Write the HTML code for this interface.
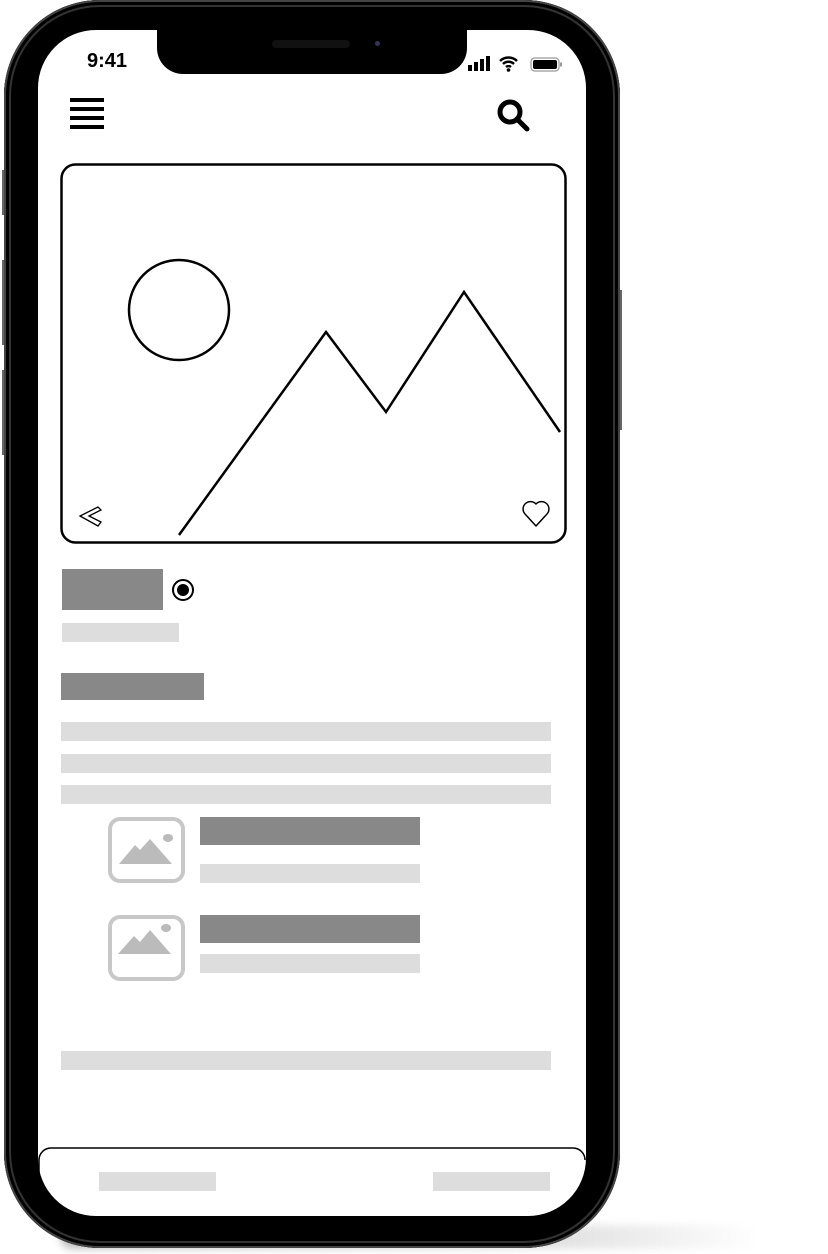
<!DOCTYPE html>
<html><head><meta charset="utf-8"><style>
body{margin:0;width:828px;height:1254px;background:#fff;position:relative;overflow:hidden;font-family:"Liberation Sans",sans-serif}
.a{position:absolute}
.dk{background:#888}.lt{background:#ddd}
</style></head><body>
<div class="a" style="left:60px;top:1225px;width:700px;height:24px;background:linear-gradient(90deg,rgba(0,0,0,.25),rgba(0,0,0,.12) 70%,rgba(0,0,0,0));filter:blur(4px);border-radius:12px"></div>
<div class="a" style="left:2px;top:170px;width:4px;height:45px;background:#666"></div>
<div class="a" style="left:2px;top:260px;width:4px;height:85px;background:#666"></div>
<div class="a" style="left:2px;top:370px;width:4px;height:85px;background:#666"></div>
<div class="a" style="left:618px;top:290px;width:4px;height:140px;background:#666"></div>
<div class="a" style="left:4px;top:0;width:616px;height:1248px;background:#000;border-radius:96px;box-shadow:inset 0 0 0 2px #444,inset 0 0 0 5px #000,inset 0 0 0 7px #333"></div>
<div class="a" style="left:38px;top:30px;width:548px;height:1186px;background:#fff;border-radius:58px;overflow:hidden">
 <div class="a" style="left:119px;top:-2px;width:310px;height:46px;background:#000;border-radius:0 0 26px 26px"></div>
 <div class="a" style="left:234px;top:10px;width:78px;height:8px;background:#111;border-radius:4px"></div>
 <div class="a" style="left:337px;top:11px;width:5px;height:5px;background:#335;border-radius:50%"></div>
 <div class="a" style="left:49px;top:20px;font-size:20px;font-weight:bold;color:#000">9:41</div>
 <svg class="a" style="left:428px;top:24px" width="100" height="20" viewBox="0 0 100 20">
  <rect x="2" y="11" width="4" height="6" fill="#000"/><rect x="8" y="8" width="4" height="9" fill="#000"/><rect x="14" y="5" width="4" height="12" fill="#000"/><rect x="20" y="2" width="4" height="15" fill="#000"/>
  <path d="M34 7a12 12 0 0 1 17 0M37 10a8 8 0 0 1 11 0M40 13a4 4 0 0 1 5 0" stroke="#000" stroke-width="2.5" fill="none"/><circle cx="42.5" cy="16" r="1.8" fill="#000"/>
  <rect x="65" y="4" width="28" height="13" rx="3.5" fill="none" stroke="#999" stroke-width="1.2"/><rect x="67" y="6" width="24" height="9" rx="2" fill="#000"/><rect x="94" y="8.5" width="2" height="4" fill="#999"/>
 </svg>
 <div class="a" style="left:32px;top:68px;width:34px">
  <div style="height:4px;background:#000;margin-bottom:5px"></div><div style="height:4px;background:#000;margin-bottom:5px"></div><div style="height:4px;background:#000;margin-bottom:5px"></div><div style="height:4px;background:#000"></div>
 </div>
 <svg class="a" style="left:458px;top:68px" width="40" height="40" viewBox="0 0 40 40"><circle cx="14" cy="14" r="10" stroke="#000" stroke-width="5" fill="none"/><path d="M21 21l10 10" stroke="#000" stroke-width="5" stroke-linecap="round"/></svg>
</div>
<svg class="a" style="left:0;top:0" width="828" height="1254" viewBox="0 0 828 1254">
 <rect x="61.5" y="164.5" width="504" height="378" rx="14" fill="none" stroke="#000" stroke-width="2.5"/>
 <circle cx="179" cy="310" r="50" fill="none" stroke="#000" stroke-width="2.5"/>
 <polyline points="179,535 326,332 386,412 464,292 560,432" fill="none" stroke="#000" stroke-width="2.5"/>
 <path d="M98 507 L80 516 L98 526 L101 522 L89 516 L101 510 Z" fill="none" stroke="#000" stroke-width="1.3"/>
 <path d="M536 526 L525 514 A7 7 0 0 1 536 504 A7 7 0 0 1 547 514 Z" fill="none" stroke="#000" stroke-width="1.5" stroke-linejoin="round"/>
 <circle cx="183" cy="590" r="10" fill="none" stroke="#000" stroke-width="2"/><circle cx="183" cy="590" r="6" fill="#000"/>
 <g fill="#c0c0c0">
  <rect x="110" y="819" width="73" height="62" rx="10" fill="none" stroke="#c8c8c8" stroke-width="4"/>
  <path d="M119 864 L135 845 L140 850 L150 839 L172 864 Z" fill="#bbb"/><ellipse cx="168" cy="838" rx="5" ry="4" fill="#bbb"/>
  <rect x="110" y="917" width="73" height="62" rx="10" fill="none" stroke="#c8c8c8" stroke-width="4"/>
  <path d="M118 954 L134 936 L140 942 L150 930 L171 954 Z" fill="#bbb"/><ellipse cx="166" cy="928" rx="5" ry="4" fill="#bbb"/>
 </g>
 <path d="M39 1215 L39 1160 A12 12 0 0 1 51 1148 L573 1148 A12 12 0 0 1 585 1160" fill="none" stroke="#000" stroke-width="1.5"/>
</svg>
<div class="a dk" style="left:62px;top:569px;width:101px;height:41px"></div>
<div class="a lt" style="left:62px;top:623px;width:117px;height:19px"></div>
<div class="a dk" style="left:61px;top:673px;width:143px;height:27px"></div>
<div class="a lt" style="left:61px;top:722px;width:490px;height:19px"></div>
<div class="a lt" style="left:61px;top:754px;width:490px;height:19px"></div>
<div class="a lt" style="left:61px;top:785px;width:490px;height:19px"></div>
<div class="a dk" style="left:200px;top:817px;width:220px;height:28px"></div>
<div class="a lt" style="left:200px;top:864px;width:220px;height:19px"></div>
<div class="a dk" style="left:200px;top:915px;width:220px;height:28px"></div>
<div class="a lt" style="left:200px;top:954px;width:220px;height:19px"></div>
<div class="a lt" style="left:61px;top:1051px;width:490px;height:19px"></div>
<div class="a lt" style="left:99px;top:1172px;width:117px;height:19px"></div>
<div class="a lt" style="left:433px;top:1172px;width:117px;height:19px"></div>
</body></html>
